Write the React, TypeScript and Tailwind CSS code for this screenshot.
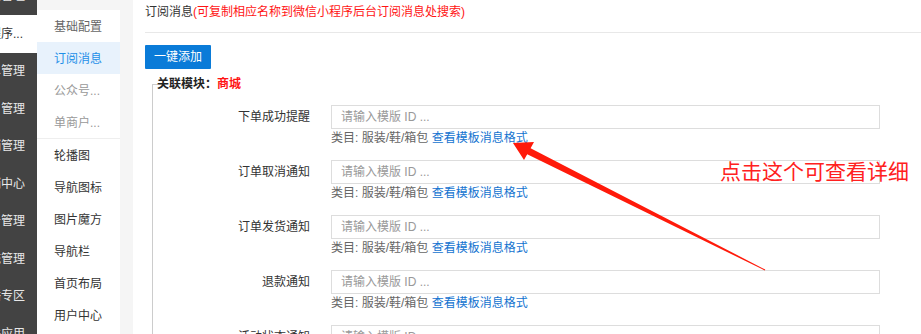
import React from "react";

const darkItems = [
  { t: "商品管理", active: false },
  { t: "小程序...", active: true },
  { t: "订单管理", active: false },
  { t: "用户管理", active: false },
  { t: "营销管理", active: false },
  { t: "分销中心", active: false },
  { t: "财务管理", active: false },
  { t: "系统管理", active: false },
  { t: "直播专区", active: false },
  { t: "插件应用", active: false },
];

const subTop = [
  { t: "基础配置", cls: "text-[#666]" },
  { t: "订阅消息", cls: "text-[#1e8fe8] bg-[#e8f2fc]" },
  { t: "公众号...", cls: "text-[#999]" },
  { t: "单商户...", cls: "text-[#999]" },
];
const subBottom = ["轮播图", "导航图标", "图片魔方", "导航栏", "首页布局", "用户中心"];

const rows = ["下单成功提醒", "订单取消通知", "订单发货通知", "退款通知", "活动状态通知"];

export default function App() {
  return (
    <div className="relative w-[921px] h-[334px] overflow-hidden flex bg-white text-[12px] text-[#333] font-['Liberation_Sans','Noto_Sans_CJK_SC',sans-serif]">
      {/* dark sidebar */}
      <div className="w-[37px] shrink-0 bg-[#434343] overflow-hidden flex flex-col">
        <div className="-mt-[22.5px] flex flex-col shrink-0">
          {darkItems.map((it, i) => (
            <div
              key={i}
              className={
                it.active
                  ? "h-[37.5px] shrink-0 flex items-center justify-end pr-[14px] whitespace-nowrap bg-white text-[#333]"
                  : "h-[37.5px] shrink-0 flex items-center justify-end pr-[12px] whitespace-nowrap text-[#e8e8e8]"
              }
            >
              {it.t}
            </div>
          ))}
        </div>
      </div>

      {/* sub sidebar */}
      <div className="w-[83px] shrink-0 flex flex-col bg-white">
        <div className="h-[10px] shrink-0 bg-[#f5f5f5]" />
        {subTop.map((it) => (
          <div key={it.t} className={"h-[32px] shrink-0 flex items-center pl-[17px] pt-[2px] " + it.cls}>
            {it.t}
          </div>
        ))}
        <div className="h-px shrink-0 bg-[#eeeeee]" />
        {subBottom.map((t) => (
          <div key={t} className="h-[32px] shrink-0 flex items-center pl-[17px] pt-[2px] text-[#333]">
            {t}
          </div>
        ))}
      </div>
      <div className="w-[13px] shrink-0 bg-[#f5f5f5]" />

      {/* main */}
      <div className="flex-1 pl-[12px] flex flex-col">
        <div className="h-[33px] shrink-0 border-b border-[#e8e8e8] pt-[3px] leading-[18px]">
          <span className="text-[#333]">订阅消息</span>
          <span className="text-[#ff1414]">(可复制相应名称到微信小程序后台订阅消息处搜索)</span>
        </div>
        <div className="mt-[12px] shrink-0">
          <button className="w-[66px] h-[24px] bg-[#0a7bd8] text-white text-[12px] rounded-[1px] flex items-center justify-center">
            一键添加
          </button>
        </div>
        <div className="relative shrink-0 ml-[7px] mt-[15px] border-l border-[#cccccc] pt-[21px]">
          <div className="absolute top-0 left-0 w-[5px] h-px bg-[#cccccc]" />
          <div className="absolute left-[4px] -top-[9px] leading-[18px] font-bold text-[#222]">
            关联模块：<span className="text-[#ff1414]">商城</span>
          </div>
          {rows.map((r) => (
            <div key={r} className="flex items-start mb-[13px]">
              <div className="w-[157px] h-[24px] leading-[24px] text-right text-[#333]">{r}</div>
              <div className="ml-[21px] flex flex-col">
                <input
                  className="w-[549px] h-[24px] border border-[#dddddd] px-[9px] text-[12px] outline-none placeholder:text-[#999]"
                  placeholder="请输入模版 ID ..."
                />
                <div className="leading-[18px] text-[#666]">
                  类目: 服装/鞋/箱包 <span className="text-[#1373d0]">查看模板消息格式</span>
                </div>
              </div>
            </div>
          ))}
        </div>
      </div>

      {/* annotation */}
      <svg className="absolute left-0 top-0 pointer-events-none" width="921" height="334" viewBox="0 0 921 334">
        <polygon
          points="513,143 534,142 530.6,148.2 765.3,269.6 764.7,270.4 527.2,154.2 524,160"
          fill="#ff1a0a"
        />
      </svg>
      <div className="absolute left-[720px] top-[159px] text-[21px] leading-[26px] text-[#ff2020] whitespace-nowrap">
        点击这个可查看详细
      </div>
    </div>
  );
}
